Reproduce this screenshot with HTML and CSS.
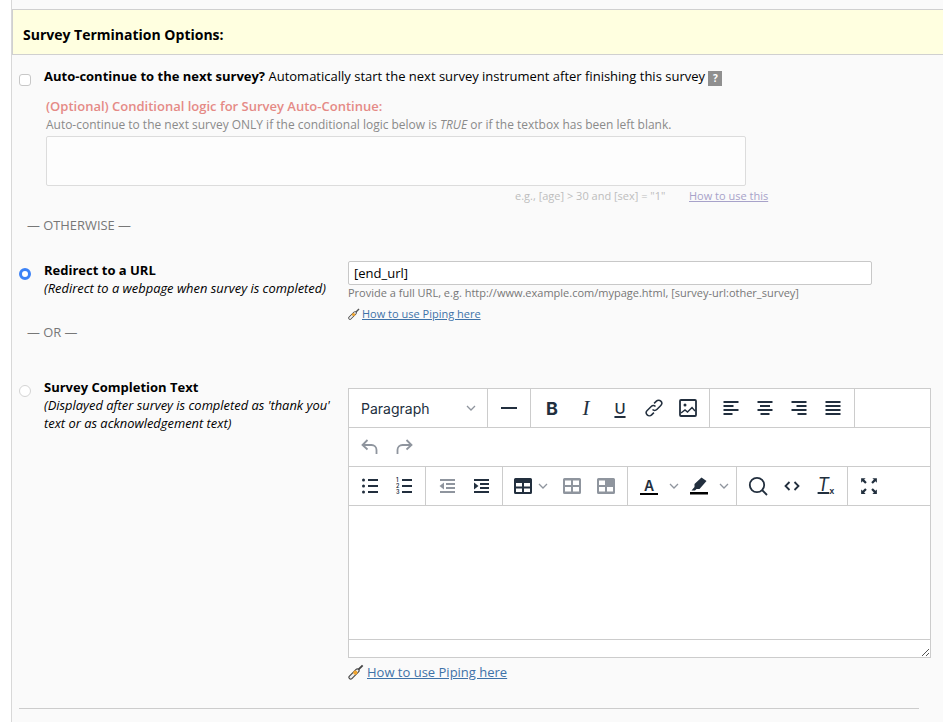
FILE: index.html
```html
<!DOCTYPE html>
<html lang="en">
<head>
<meta charset="UTF-8" />
<meta name="viewport" content="width=device-width, initial-scale=1.0"/>
<title>Survey Termination Options</title>
<link rel="stylesheet" href="styles.css">
</head>
<body>

<div class="panel">
  <div class="section-header">Survey Termination Options:</div>

  <!-- Auto-continue -->
  <div class="auto-row">
    <span class="check"></span>
    <div class="auto-text"><b>Auto-continue to the next survey?</b> Automatically start the next survey instrument after finishing this survey <span class="help">?</span></div>
  </div>
  <div class="logic">
    <div class="logic-title">(Optional) Conditional logic for Survey Auto-Continue:</div>
    <div class="logic-desc">Auto-continue to the next survey ONLY if the conditional logic below is <i>TRUE</i> or if the textbox has been left blank.</div>
    <div class="logic-box"></div>
    <div class="logic-hint">
      <span class="example">e.g., [age] &gt; 30 and [sex] = "1"</span>
      <a class="faded-link" href="#">How to use this</a>
    </div>
  </div>

  <div class="divider-text otherwise">— OTHERWISE —</div>

  <!-- Redirect -->
  <div class="option redirect">
    <span class="radio radio-on"></span>
    <div class="option-label">
      <b>Redirect to a URL</b>
      <i>(Redirect to a webpage when survey is completed)</i>
    </div>
    <div class="option-body">
      <div class="url-input">[end_url]</div>
      <div class="url-hint">Provide a full URL, e.g. http://www.example.com/mypage.html, [survey-url:other_survey]</div>
      <div class="piping-small">
        <svg class="pipe-icon" width="12" height="12" viewBox="0 0 12 12"><path d="M7 5 11 1" stroke="#555" stroke-width="1.400"/><path d="M2 10 7 5" stroke="#444" stroke-width="3.400" stroke-linecap="round"/><path d="M2 10 7 5" stroke="#eee" stroke-width="1.800" stroke-linecap="round"/><circle cx="5.500" cy="6.500" r="1.600" fill="#f2a52e"/></svg>
        <a href="#">How to use Piping here</a>
      </div>
    </div>
  </div>

  <div class="divider-text or">— OR —</div>

  <!-- Completion text -->
  <div class="option completion">
    <span class="radio"></span>
    <div class="option-label">
      <b>Survey Completion Text</b>
      <i>(Displayed after survey is completed as 'thank you' text or as acknowledgement text)</i>
    </div>
    <div class="option-body">
      <div class="editor">
        <div class="tb-row">
          <div class="tb-group select-group">
            <span class="select-text">Paragraph</span>
            <svg class="chev" width="10" height="6" viewBox="0 0 10 6"><path d="M1 1l4 4 4-4"/></svg>
          </div>
          <div class="tb-group">
            <span class="btn"><svg width="20" height="20" viewBox="0 0 20 20"><rect x="2" y="9" width="16" height="2"/></svg></span>
          </div>
          <div class="tb-group">
            <span class="btn glyph-b">B</span>
            <span class="btn glyph-i">I</span>
            <span class="btn glyph-u">U</span>
            <span class="btn"><svg class="line thin" width="20" height="20" viewBox="0 0 20 20"><path d="M8.500 11.500a3 3 0 0 0 4.300 0l4-4a3.100 3.100 0 0 0-4.400-4.400l-2.300 2.300"/><path d="M11.500 8.500a3 3 0 0 0-4.300 0l-4 4a3.100 3.100 0 0 0 4.400 4.400l2.300-2.300"/></svg></span>
            <span class="btn"><svg class="line" width="20" height="20" viewBox="0 0 20 20"><rect x="2" y="2" width="16" height="16" rx="1"/><circle cx="7" cy="7" r="1.500" fill="#222f3e" stroke="none"/><path d="M3 15l4-3 2.500 2L14 9.500l3 3.500" stroke-width="1.400"/></svg></span>
          </div>
          <div class="tb-group">
            <span class="btn"><svg width="20" height="20" viewBox="0 0 20 20"><rect x="2.500" y="3" width="15" height="2"/><rect x="2.500" y="7" width="10" height="2"/><rect x="2.500" y="11" width="15" height="2"/><rect x="2.500" y="15" width="9" height="2"/></svg></span>
            <span class="btn"><svg width="20" height="20" viewBox="0 0 20 20"><rect x="2.500" y="3" width="15" height="2"/><rect x="5" y="7" width="10" height="2"/><rect x="2.500" y="11" width="15" height="2"/><rect x="5.500" y="15" width="9" height="2"/></svg></span>
            <span class="btn"><svg width="20" height="20" viewBox="0 0 20 20"><rect x="2.500" y="3" width="15" height="2"/><rect x="7.500" y="7" width="10" height="2"/><rect x="2.500" y="11" width="15" height="2"/><rect x="8.500" y="15" width="9" height="2"/></svg></span>
            <span class="btn"><svg width="20" height="20" viewBox="0 0 20 20"><rect x="2.500" y="3" width="15" height="2"/><rect x="2.500" y="7" width="15" height="2"/><rect x="2.500" y="11" width="15" height="2"/><rect x="2.500" y="15" width="15" height="2"/></svg></span>
          </div>
        </div>
        <div class="tb-row">
          <div class="tb-group no-sep">
            <span class="btn off"><svg class="line" width="20" height="20" viewBox="0 0 20 20"><path d="M7.500 3 2.500 8l5 4.500"/><path d="M3 8h8.500a5 5 0 0 1 5 5v4"/></svg></span>
            <span class="btn off"><svg class="line" width="20" height="20" viewBox="0 0 20 20"><path d="M12.500 3l5 5-5 4.500"/><path d="M17 8H8.500a5 5 0 0 0-5 5v4"/></svg></span>
          </div>
        </div>
        <div class="tb-row">
          <div class="tb-group">
            <span class="btn"><svg width="20" height="20" viewBox="0 0 20 20"><circle cx="3.500" cy="4" r="1.500"/><circle cx="3.500" cy="10" r="1.500"/><circle cx="3.500" cy="16" r="1.500"/><rect x="8" y="3" width="10" height="2"/><rect x="8" y="9" width="10" height="2"/><rect x="8" y="15" width="10" height="2"/></svg></span>
            <span class="btn"><svg width="20" height="20" viewBox="0 0 20 20"><text class="tiny-num" x="2" y="6">1</text><text class="tiny-num" x="2" y="12">2</text><text class="tiny-num" x="2" y="18">3</text><rect x="8" y="3" width="10" height="2"/><rect x="8" y="9" width="10" height="2"/><rect x="8" y="15" width="10" height="2"/></svg></span>
          </div>
          <div class="tb-group">
            <span class="btn off"><svg width="20" height="20" viewBox="0 0 20 20"><rect x="3" y="3" width="15" height="2"/><rect x="9" y="7" width="9" height="2"/><rect x="9" y="11" width="9" height="2"/><rect x="3" y="15" width="15" height="2"/><path d="M7 6.500v7L2.500 10z"/></svg></span>
            <span class="btn"><svg width="20" height="20" viewBox="0 0 20 20"><rect x="3" y="3" width="15" height="2"/><rect x="9" y="7" width="9" height="2"/><rect x="9" y="11" width="9" height="2"/><rect x="3" y="15" width="15" height="2"/><path d="M3 6.500v7L7.500 10z"/></svg></span>
          </div>
          <div class="tb-group">
            <span class="btn split table-split">
              <svg width="18" height="16" viewBox="0 0 18 16"><path fill-rule="evenodd" d="M1.500 0h15A1.500 1.500 0 0 1 18 1.500v13a1.500 1.500 0 0 1-1.500 1.500h-15A1.500 1.500 0 0 1 0 14.500v-13A1.500 1.500 0 0 1 1.500 0zM2 5v3.500h6V5zm8 0v3.500h6V5zM2 10.500V14h6v-3.500zm8 0V14h6v-3.500z"/></svg>
              <svg class="chev" width="10" height="6" viewBox="0 0 10 6"><path d="M1 1l4 4 4-4"/></svg>
            </span>
            <span class="btn off"><svg width="18" height="16" viewBox="0 0 18 16"><path fill-rule="evenodd" d="M1.500 0h15A1.500 1.500 0 0 1 18 1.500v13a1.500 1.500 0 0 1-1.500 1.500h-15A1.500 1.500 0 0 1 0 14.500v-13A1.500 1.500 0 0 1 1.500 0zM2 2.500v4.500h6V2.500zm8 0v4.500h6V2.500zM2 9v4.500h6V9zm8 0v4.500h6V9z"/></svg></span>
            <span class="btn off"><svg width="18" height="16" viewBox="0 0 18 16"><path fill-rule="evenodd" d="M1.500 0h15A1.500 1.500 0 0 1 18 1.500v13a1.500 1.500 0 0 1-1.500 1.500h-15A1.500 1.500 0 0 1 0 14.500v-13A1.500 1.500 0 0 1 1.500 0zM2 2.500v4.500h6V2.500zM2 9v4.500h6V9zm8 0v4.500h6V9z"/></svg></span>
          </div>
          <div class="tb-group">
            <span class="btn split color-split">
              <span class="color-a">A</span>
              <svg class="chev" width="10" height="6" viewBox="0 0 10 6"><path d="M1 1l4 4 4-4"/></svg>
            </span>
            <span class="btn split color-split">
              <span class="color-pen"><svg width="18" height="18" viewBox="0 0 18 18"><path d="M11.500.5 16.500 4 9.500 12H6.500L5 13.500H1.500l3-3.500V7z"/><rect y="15" width="18" height="2.500" fill="#000"/></svg></span>
              <svg class="chev" width="10" height="6" viewBox="0 0 10 6"><path d="M1 1l4 4 4-4"/></svg>
            </span>
          </div>
          <div class="tb-group">
            <span class="btn"><svg class="line" width="20" height="20" viewBox="0 0 20 20"><circle cx="9" cy="9" r="7.200"/><path d="m14 14 5 5"/></svg></span>
            <span class="btn"><svg class="line" width="20" height="20" viewBox="0 0 20 20"><path d="M7.500 6 3.500 10l4 4"/><path d="M12.500 6l4 4-4 4"/></svg></span>
            <span class="btn clear-format"><span class="glyph-t">T</span><span class="glyph-x">x</span></span>
          </div>
          <div class="tb-group no-sep">
            <span class="btn"><svg width="18" height="18" viewBox="2 2 16 16"><path d="M3 3h4L5.700 4.300 8 6.600 6.600 8 4.300 5.700 3 7zM17 3v4l-1.300-1.300L13.400 8 12 6.600l2.300-2.300L13 3zM3 17v-4l1.300 1.300L6.600 12 8 13.400l-2.300 2.300L7 17zM17 17h-4l1.300-1.300-2.300-2.300 1.400-1.400 2.300 2.300L17 13z"/></svg></span>
          </div>
        </div>
        <div class="edit-area"></div>
        <div class="status-bar">
          <svg class="grip" width="10" height="10" viewBox="0 0 10 10"><path d="M9 2 2 9M9 6 6 9" stroke="#555" stroke-width="1" fill="none"/></svg>
        </div>
      </div>
      <div class="piping-large">
        <svg class="pipe-icon" width="16" height="16" viewBox="0 0 12 12"><path d="M7 5 11 1" stroke="#444" stroke-width="1.400"/><path d="M2 10 7 5" stroke="#444" stroke-width="3.400" stroke-linecap="round"/><path d="M2 10 7 5" stroke="#eee" stroke-width="1.800" stroke-linecap="round"/><circle cx="5.500" cy="6.500" r="1.600" fill="#f2a52e"/></svg>
        <a href="#">How to use Piping here</a>
      </div>
    </div>
  </div>

  <div class="bottom-rule"></div>
</div>

</body>
</html>
```

FILE: styles.css
```css
body {
  margin: 0;
  background-color: #fff;
  font-family: "Open Sans", sans-serif;
  color: #000;
  overflow: hidden;
}
a {
  color: #3e72a8;
}
.panel {
  margin-left: 11px;
  height: 722px;
  box-sizing: border-box;
  padding-top: 9px;
  background-color: #fafafa;
  border-left: 1px solid #d8d8d8;
}
.section-header {
  box-sizing: border-box;
  height: 46px;
  padding: 15px 0 0 10px;
  background-color: #ffffe0;
  border: 1px solid #d0d0d0;
  border-right: 0;
  font-size: 14px;
  font-weight: 700;
  line-height: 20px;
}

/* auto-continue */
.auto-row {
  display: flex;
  margin-top: 11px;
  height: 20px;
  padding-left: 7px;
}
.check {
  box-sizing: border-box;
  width: 12px;
  height: 12px;
  margin-top: 8px;
  margin-right: 13px;
  background-color: #fff;
  border: 1px solid #c8c8c8;
  border-radius: 3px;
}
.auto-text {
  font-size: 13px;
  line-height: 20px;
  white-space: nowrap;
}
.help {
  display: inline-block;
  width: 14px;
  height: 15px;
  background-color: #8f8f8f;
  color: #fff;
  font-size: 10px;
  font-weight: 700;
  line-height: 15px;
  text-align: center;
  vertical-align: -1px;
}
.logic {
  margin-left: 34px;
  width: 760px;
  padding-top: 11px;
}
.logic-title {
  color: #e58a86;
  font-size: 13px;
  font-weight: 600;
  line-height: 18px;
}
.logic-desc {
  margin-top: 1px;
  color: #8a8a8a;
  font-size: 11.980px;
  line-height: 18px;
}
.logic-box {
  box-sizing: border-box;
  width: 700px;
  height: 50px;
  margin-top: 2px;
  background-color: #fdfdfd;
  border: 1px solid #dcdcdc;
  border-radius: 2px;
}
.logic-hint {
  display: flex;
  margin-top: 2px;
  padding-left: 469px;
  font-size: 11px;
  line-height: 16px;
  white-space: nowrap;
}
.example {
  width: 174px;
  color: #bdbdbd;
}
.faded-link {
  color: #a7a2c9;
}
.divider-text {
  padding-left: 15px;
  color: #777;
  font-size: 12.900px;
  line-height: 18px;
}
.otherwise {
  margin-top: 12px;
}

/* radio options */
.option {
  display: flex;
  padding-left: 7px;
}
.radio {
  flex: none;
  box-sizing: border-box;
  width: 12px;
  height: 12px;
  margin-right: 13px;
  background-color: #fff;
  border: 1px solid #d4d4d4;
  border-radius: 50%;
}
.radio-on {
  background-color: #fff;
  border: 3.500px solid #3b82f6;
}
.option-label {
  flex: none;
  width: 304px;
  font-size: 13px;
  line-height: 18px;
}
.option-label b,
.option-label i {
  display: block;
}
.option-label i {
  font-size: 12.900px;
}
.redirect {
  margin-top: 27px;
  height: 70px;
}
.redirect .radio {
  margin-top: 7px;
}
.url-input {
  box-sizing: border-box;
  width: 524px;
  height: 24px;
  padding-left: 5px;
  background-color: #fff;
  border: 1px solid #c8c8c8;
  border-radius: 2px;
  font-size: 13px;
  line-height: 22px;
}
.url-hint {
  color: #777;
  font-size: 11px;
  line-height: 15px;
}
.piping-small {
  display: flex;
  align-items: center;
  gap: 2px;
  margin-top: 6px;
  font-size: 11px;
  line-height: 15px;
}
.or {
  margin-top: -8px;
}
.completion {
  margin-top: 37px;
}
.completion .radio {
  margin-top: 7px;
}
.completion .option-body {
  margin-top: 10px;
}
.piping-large {
  display: flex;
  align-items: center;
  gap: 3px;
  margin-top: 5px;
  font-size: 13px;
  line-height: 18px;
}

/* editor */
.editor {
  box-sizing: border-box;
  width: 583px;
  height: 270px;
  display: flex;
  flex-direction: column;
  background-color: #fff;
  border: 1px solid #ccc;
  font-family: Inter, sans-serif;
}
.tb-row {
  display: flex;
  height: 39px;
  box-sizing: border-box;
  border-bottom: 1px solid #ccc;
}
.tb-group {
  display: flex;
  align-items: center;
  padding: 0 4px;
  border-right: 1px solid #ccc;
}
.no-sep {
  border-right: 0;
}
.select-group {
  box-sizing: border-box;
  width: 139px;
  padding: 0 11px 0 12px;
  justify-content: space-between;
}
.select-text {
  color: #222f3e;
  font-size: 14px;
}
.btn {
  display: flex;
  align-items: center;
  justify-content: center;
  width: 34px;
  height: 38px;
  color: #222f3e;
}
.btn svg {
  fill: #222f3e;
}
.btn.off,
.btn.off svg {
  color: #8f959e;
  fill: #8f959e;
}
.btn svg.line {
  fill: none;
  stroke: #222f3e;
  stroke-width: 1.800;
}
.btn svg.thin {
  stroke-width: 1.500;
}
.btn.off svg.line {
  fill: none;
  stroke: #8f959e;
}
.chev {
  flex: none;
  fill: none;
}
.btn svg.chev {
  fill: none;
}
.chev path {
  fill: none;
  stroke: #8f959e;
  stroke-width: 1.300;
}
.glyph-b {
  font-size: 18px;
  font-weight: 700;
}
.glyph-i {
  font-family: "Liberation Serif", serif;
  font-size: 21px;
  font-style: italic;
}
.glyph-u {
  font-size: 15px;
  font-weight: 500;
  text-decoration: underline;
  text-underline-offset: 2px;
  text-decoration-thickness: 2px;
}
.tiny-num {
  font-size: 5.500px;
  font-weight: 600;
}
.split {
  justify-content: flex-start;
}
.table-split {
  width: 48px;
  gap: 6px;
  padding-left: 7px;
  box-sizing: border-box;
}
.color-split {
  width: 50px;
  gap: 11px;
  padding-left: 8px;
  box-sizing: border-box;
}
.color-split svg:not(.chev) {
  display: block;
}
.color-a {
  box-sizing: border-box;
  width: 18px;
  height: 17px;
  border-bottom: 2.500px solid #000;
  color: #222f3e;
  font-size: 14px;
  font-weight: 600;
  line-height: 15px;
  text-align: center;
}
.color-pen {
  width: 18px;
  height: 18px;
}
.clear-format {
  align-items: flex-end;
  padding-bottom: 10px;
  box-sizing: border-box;
}
.glyph-t {
  font-size: 18px;
  font-style: italic;
  font-weight: 400;
  line-height: 20px;
  text-decoration: underline;
  text-decoration-thickness: 2px;
}
.glyph-x {
  font-size: 9px;
  font-weight: 600;
  line-height: 9px;
}
.edit-area {
  flex: 1;
  border-bottom: 1px solid #ccc;
}
.status-bar {
  display: flex;
  align-items: flex-end;
  justify-content: flex-end;
  height: 17px;
}
.bottom-rule {
  width: 900px;
  margin: 27px 0 0 7px;
  border-top: 1px solid #ccc;
}
```
